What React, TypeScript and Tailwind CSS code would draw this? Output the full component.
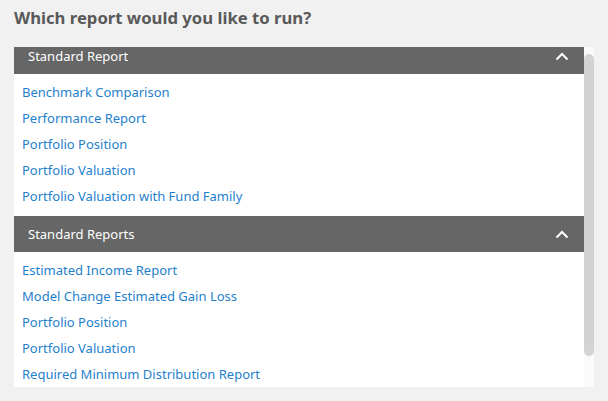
const groups = [
  {
    title: "Standard Report",
    reports: [
      "Benchmark Comparison",
      "Performance Report",
      "Portfolio Position",
      "Portfolio Valuation",
      "Portfolio Valuation with Fund Family",
    ],
  },
  {
    title: "Standard Reports",
    reports: [
      "Estimated Income Report",
      "Model Change Estimated Gain Loss",
      "Portfolio Position",
      "Portfolio Valuation",
      "Required Minimum Distribution Report",
    ],
  },
];

function Chevron() {
  return (
    <svg width="14" height="9" viewBox="0 0 14 9" fill="none">
      <path d="M1.5 7.5L7 2l5.5 5.5" stroke="#fff" strokeWidth="2" />
    </svg>
  );
}

export default function App() {
  return (
    <div
      className="w-[608px] h-[401px] bg-[#f1f1f1] pl-[14px] pt-[6px]"
      style={{ fontFamily: "'Noto Sans', 'Open Sans', sans-serif" }}
    >
      <h1 className="text-[16.7px] font-bold text-[#595959] leading-[24px] mb-[17px]">
        Which report would you like to run?
      </h1>
      <div className="flex w-[580px] h-[340px]">
        <div className="w-[570px] h-full bg-white overflow-hidden">
          <div className="-mt-[9px]">
            {groups.map((group) => (
              <div key={group.title}>
                <div className="h-[36px] bg-[#666666] flex items-center justify-between pl-[14px] pr-[15px]">
                  <span className="text-white text-[13px] pt-[2px]">{group.title}</span>
                  <Chevron />
                </div>
                <ul className="pt-[6px] pb-[6px] pl-[8px]">
                  {group.reports.map((r) => (
                    <li
                      key={r}
                      className="h-[26px] flex items-center text-[13px] text-[#1f7fcc]"
                    >
                      {r}
                    </li>
                  ))}
                </ul>
              </div>
            ))}
          </div>
        </div>
        <div className="w-[10px] h-full bg-[#fafafa] pt-[7px]">
          <div className="h-[302px] bg-[#d3d3d3] rounded-full" />
        </div>
      </div>
    </div>
  );
}
